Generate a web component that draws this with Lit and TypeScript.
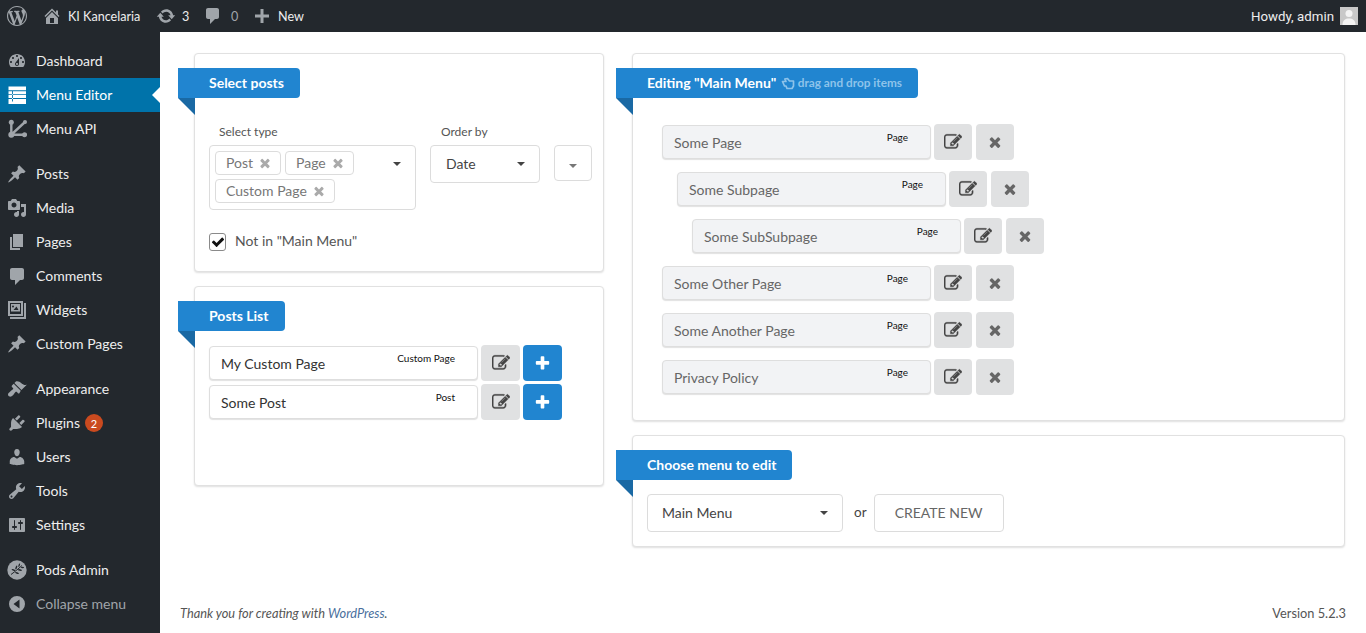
import { LitElement, html, css } from "lit";
import { customElement } from "lit/decorators.js";

const D: Record<string, string> = {
  wp: "M20 10c0-5.51-4.49-10-10-10C4.48 0 0 4.49 0 10c0 5.52 4.48 10 10 10 5.51 0 10-4.48 10-10zM7.78 15.37L4.37 6.22c.55-.02 1.17-.08 1.17-.08.5-.06.44-1.13-.06-1.11 0 0-1.45.11-2.37.11-.18 0-.37 0-.58-.01C4.12 2.69 6.87 1.11 10 1.11c2.33 0 4.45.87 6.05 2.34-.68-.11-1.65.39-1.65 1.58 0 .74.45 1.36.9 2.1.35.61.55 1.36.55 2.46 0 1.49-1.4 5-1.4 5l-3.03-8.37c.54-.02.82-.17.82-.17.5-.05.44-1.25-.06-1.22 0 0-1.44.12-2.38.12-.87 0-2.33-.12-2.33-.12-.5-.03-.56 1.2-.06 1.22l.92.08 1.26 3.41zM17.41 10c.24-.64.74-1.87.43-4.25.7 1.29 1.05 2.71 1.05 4.25 0 3.29-1.73 6.24-4.4 7.78.97-2.59 1.94-5.2 2.92-7.78zM6.1 18.09C3.12 16.65 1.11 13.53 1.11 10c0-1.3.23-2.48.72-3.59C3.25 10.3 4.67 14.2 6.1 18.09zm4.03-6.63l2.58 6.98c-.86.29-1.76.45-2.71.45-.79 0-1.57-.11-2.29-.33.81-2.38 1.62-4.74 2.42-7.1z",
  home: "M16 8.5l1.53 1.53-1.06 1.06L10 4.62l-6.47 6.47-1.06-1.06L10 2.5l4 4v-2h2v4zm-6-2.46l6 5.99V18H4v-5.97zM12 17v-5H8v5h4z",
  updates: "M10.2 3.28c3.53 0 6.43 2.61 6.92 6h2.08l-3.5 4-3.5-4h2.32c-.45-1.97-2.21-3.45-4.32-3.45-1.45 0-2.73.71-3.54 1.78L4.95 5.66C6.23 4.2 8.11 3.28 10.2 3.28zm-.4 13.44c-3.52 0-6.43-2.61-6.92-6H.8l3.5-4c1.17 1.33 2.33 2.67 3.5 4H5.48c.45 1.97 2.21 3.45 4.32 3.45 1.45 0 2.73-.71 3.54-1.78l1.71 1.95c-1.28 1.46-3.15 2.38-5.25 2.38z",
  comment: "M5 2h9c1.1 0 2 .9 2 2v7c0 1.1-.9 2-2 2h-2l-5 5v-5H5c-1.1 0-2-.9-2-2V4c0-1.1.9-2 2-2z",
  plus: "M17 8.500v3h-5.500V17h-3v-5.500H3v-3h5.500V3h3v5.500z",
  dashboard: "M3.76 16h12.48c1.1-1.37 1.76-3.11 1.76-5 0-4.42-3.58-8-8-8s-8 3.58-8 8c0 1.89.66 3.63 1.76 5zM10 4c.55 0 1 .45 1 1s-.45 1-1 1-1-.45-1-1 .45-1 1-1zM6 6c.55 0 1 .45 1 1s-.45 1-1 1-1-.45-1-1 .45-1 1-1zm8 0c.55 0 1 .45 1 1s-.45 1-1 1-1-.45-1-1 .45-1 1-1zm-5.37 5.55L12 7v6c0 1.1-.9 2-2 2s-2-.9-2-2c0-.57.24-1.08.63-1.45zM4 10c.55 0 1 .45 1 1s-.45 1-1 1-1-.45-1-1 .45-1 1-1zm12 0c.55 0 1 .45 1 1s-.45 1-1 1-1-.45-1-1 .45-1 1-1zm-5 3c0-.55-.45-1-1-1s-1 .45-1 1 .45 1 1 1 1-.45 1-1z",
  pin: "M10.44 3.02l1.82-1.82 6.36 6.35-1.83 1.82c-1.05-.68-2.48-.57-3.41.36l-.75.75c-.92.93-1.04 2.35-.35 3.41l-1.83 1.82-2.41-2.41-2.8 2.79c-.42.42-3.38 2.71-3.8 2.29s1.86-3.39 2.28-3.81l2.79-2.79L4.1 9.36l1.83-1.82c1.05.69 2.48.57 3.4-.36l.75-.75c.93-.92 1.05-2.35.36-3.41z",
  media: "M13 11V4c0-.55-.45-1-1-1h-1.670L9 1H5L3.670 3H2c-.55 0-1 .45-1 1v7c0 .55.45 1 1 1h10c.55 0 1-.45 1-1zM7 4.500c1.380 0 2.500 1.120 2.500 2.500S8.380 9.500 7 9.500 4.500 8.380 4.500 7 5.620 4.500 7 4.500zM14 6h5v10.500c0 1.380-1.120 2.500-2.500 2.500S14 17.880 14 16.500s1.120-2.500 2.500-2.500c.17 0 .34.02.5.05V9h-3V6zm-4 8.050V13h2v3.500c0 1.380-1.120 2.500-2.500 2.500S7 17.880 7 16.500 8.120 14 9.500 14c.17 0 .34.02.5.05z",
  page: "M6 15V2h10v13H6zm-1 1h8v2H3V5h2v11z",
  comments: "M5 2h10c1.100 0 2 .9 2 2v8c0 1.100-.9 2-2 2h-2l-5 5v-5H5c-1.100 0-2-.9-2-2V4c0-1.100.9-2 2-2z",
  widgets: "M1 1h15v15H1zM3 3v11h11V3zM17 3h2v16H3v-2h14zM4 4h9v7.500H4zM6 5.500a1 1 0 100 2 1 1 0 000-2zM6.500 10l3-3.500 2 3.500z",
  appearance: "M14.480 11.060L7.410 3.990l1.500-1.500c.5-.56 2.300-.47 3.510.32 1.210.8 1.430 1.280 2.910 2.100 1.180.64 2.450 1.260 4.450.85zm-.71.71L6.700 4.700 4.930 6.470c-.39.39-.39 1.020 0 1.410l1.060 1.060c.39.39.39 1.030 0 1.420-.6.6-1.430 1.110-2.210 1.690-.35.26-.7.53-1.010.84C1.430 13.730 1 14.730 1 15.500c0 .95.700 1.710 1.600 2 .23.08.48.13.73.13.8 0 1.800-.5 2.630-1.300.31-.31.58-.66.84-1.010.58-.78 1.090-1.610 1.690-2.210.39-.39 1.030-.39 1.420 0l1.060 1.060c.39.39 1.020.39 1.410 0z",
  plugins: "M13.110 4.360L9.870 7.600 8 5.730l3.240-3.240c.35-.34 1.050-.2 1.560.32.52.51.66 1.210.31 1.550zm-8 1.770l.91-1.120 9.010 9.010-1.190.84c-.71.71-2.630 1.160-3.820 1.160H6.140L4.900 17.260c-.59.59-1.540.59-2.120 0-.59-.58-.59-1.530 0-2.120l1.240-1.240v-3.880c0-1.130.4-3.190 1.090-3.890zm7.260 3.970l3.240-3.240c.34-.35 1.040-.21 1.550.31.52.51.66 1.210.31 1.550l-3.240 3.250z",
  users: "M10 9.250c-2.270 0-2.730-3.440-2.730-3.440C7 4.020 7.820 2 9.970 2c2.160 0 2.980 2.020 2.710 3.810 0 0-.41 3.440-2.680 3.440zm0 2.570L12.720 10c2.390 0 4.520 2.330 4.520 4.530v2.490s-3.650 1.130-7.240 1.130c-3.650 0-7.240-1.130-7.240-1.130v-2.490c0-2.250 1.940-4.530 4.470-4.530z",
  tools: "M16.680 9.770c-1.340 1.340-3.300 1.670-4.950.99l-5.410 6.520c-.99.99-2.590.99-3.580 0s-.99-2.590 0-3.570l6.520-5.420c-.68-1.650-.35-3.610.99-4.950 1.280-1.280 3.120-1.620 4.720-1.060l-2.890 2.890 2.820 2.820 2.860-2.870c.53 1.580.18 3.390-1.080 4.650zM3.810 16.210c.4.39 1.040.39 1.430 0 .4-.4.4-1.040 0-1.430-.39-.4-1.030-.4-1.430 0-.39.39-.39 1.030 0 1.430z",
  settings: "M18 16V4c0-.55-.45-1-1-1H3c-.55 0-1 .45-1 1v12c0 .55.45 1 1 1h14c.55 0 1-.45 1-1zM8 11h1c.55 0 1 .45 1 1s-.45 1-1 1H8v1.500c0 .28-.22.5-.5.5s-.5-.22-.5-.5V13H6c-.55 0-1-.45-1-1s.45-1 1-1h1V5.500c0-.28.22-.5.5-.5s.5.22.5.5V11zm5-2h-1c-.55 0-1-.45-1-1s.45-1 1-1h1V5.500c0-.28.22-.5.5-.5s.5.22.5.5V7h1c.55 0 1 .45 1 1s-.45 1-1 1h-1v5.500c0 .28-.22.5-.5.5s-.5-.22-.5-.5V9z",
  collapse: "M10 2a8 8 0 100 16 8 8 0 000-16zM12.500 14.500L6.500 10l6-4.500z",
};

const FA = {
  edit: "M888 1184l116-116-152-152-116 116v56h96v96h56zm440-720q-16-16-33 1l-350 350q-17 17-1 33t33-1l350-350q17-17 1-33zm80 594v190q0 119-84.500 203.500t-203.500 84.500h-832q-119 0-203.500-84.500t-84.500-203.500v-832q0-119 84.500-203.500t203.500-84.500h832q63 0 117 25 15 7 18 23 3 17-9 29l-49 49q-14 14-32 8-23-6-45-6h-832q-66 0-113 47t-47 113v832q0 66 47 113t113 47h832q66 0 113-47t47-113v-126q0-13 9-22l64-64q15-15 35-7t20 29zm-96-738l288 288-672 672h-288v-288zm444 132l-92 92-288-288 92-92q28-28 68-28t68 28l152 152q28 28 28 68t-28 68z",
  times: "M1490 1322q0 40-28 68l-136 136q-28 28-68 28t-68-28l-294-294-294 294q-28 28-68 28t-68-28l-136-136q-28-28-28-68t28-68l294-294-294-294q-28-28-28-68t28-68l136-136q28-28 68-28t68 28l294 294 294-294q28-28 68-28t68 28l136 136q28 28 28 68t-28 68l-294 294 294 294q28 28 28 68z",
  plus: "M1600 736v192q0 40-28 68t-68 28h-416v416q0 40-28 68t-68 28h-192q-40 0-68-28t-28-68v-416h-416q-40 0-68-28t-28-68v-192q0-40 28-68t68-28h416v-416q0-40 28-68t68-28h192q40 0 68 28t28 68v416h416q40 0 68 28t28 68z",
  check: "M1671 566q0 40-28 68l-724 724-136 136q-28 28-68 28t-68-28l-136-136-362-362q-28-28-28-68t28-68l136-136q28-28 68-28t68 28l294 295 656-657q28-28 68-28t68 28l136 136q28 28 28 68z",
};

const dash = (k: string, size = 20) => html`<svg class="ic" width=${size} height=${size} viewBox="0 0 20 20" fill="currentColor"><path fill-rule="evenodd" d=${D[k]}></path></svg>`;
const fa = (k: keyof typeof FA, size: number) => html`<svg class="fa fa-${k}" width=${size} height=${size} viewBox="0 0 1792 1792" fill="currentColor"><path d=${FA[k]}></path></svg>`;

const menuListIcon = html`<svg class="ic" width="20" height="20" viewBox="0 0 20 20" fill="#fff"><path fill-rule="evenodd" d="M1.500 1.500h17.500v17.500H1.500zM1.500 5.300v.9h17.500v-.9zM1.500 9.200v.9h17.500v-.9zM1.500 13.100v.9h17.500v-.9zM5 6.200v10.300h.9V6.200z"></path></svg>`;
const apiIcon = html`<svg class="ic" width="20" height="20" viewBox="0 0 20 20" fill="currentColor" stroke="currentColor"><path d="M4.300 3.500V15.700L18 3M4.300 15.700H17.600" fill="none" stroke-width="2.400"></path><circle cx="4.300" cy="3.300" r="2.500" stroke="none"></circle><circle cx="4.300" cy="15.700" r="3" stroke="none"></circle><circle cx="17.600" cy="15.700" r="2.500" stroke="none"></circle><circle cx="18" cy="3" r="2" stroke="none"></circle></svg>`;
const podsIcon = html`<svg class="ic" width="20" height="20" viewBox="0 0 20 20"><circle cx="10" cy="10" r="9.700" fill="currentColor"></circle><path d="M4 14.500Q9 11 15 5.500" fill="none" stroke="#23282d" stroke-width="1"></path><g fill="#23282d"><ellipse cx="6.500" cy="10" rx="2" ry=".8" transform="rotate(20 6.500 10)"></ellipse><ellipse cx="9.300" cy="7.500" rx="2" ry=".8" transform="rotate(-70 9.300 7.500)"></ellipse><ellipse cx="12.200" cy="5.200" rx="1.800" ry=".7" transform="rotate(-70 12.200 5.200)"></ellipse><ellipse cx="10" cy="13" rx="2" ry=".8" transform="rotate(20 10 13)"></ellipse><ellipse cx="13" cy="10" rx="2" ry=".8" transform="rotate(10 13 10)"></ellipse><ellipse cx="15.500" cy="7.500" rx="1.600" ry=".7"></ellipse></g></svg>`;
const handIcon = html`<svg class="hand" width="14" height="13" viewBox="0 0 14 13" fill="none" stroke="currentColor" stroke-width="1.700" stroke-linejoin="round"><path d="M1.500 4.500H5L3.800 2 6.500 1.500 8.500 4H12.500V9L11 11.500H6L5 9H3.500z"></path></svg>`;

interface MenuItem { icon: any; label: string; cls?: string; badge?: string; }

const groups: MenuItem[][] = [
  [
    { icon: dash("dashboard"), label: "Dashboard" },
    { icon: menuListIcon, label: "Menu Editor", cls: "active" },
    { icon: apiIcon, label: "Menu API" },
  ],
  [
    { icon: dash("pin"), label: "Posts" },
    { icon: dash("media"), label: "Media" },
    { icon: dash("page"), label: "Pages" },
    { icon: dash("comments"), label: "Comments" },
    { icon: dash("widgets"), label: "Widgets" },
    { icon: dash("pin"), label: "Custom Pages" },
  ],
  [
    { icon: dash("appearance"), label: "Appearance" },
    { icon: dash("plugins"), label: "Plugins", badge: "2" },
    { icon: dash("users"), label: "Users" },
    { icon: dash("tools"), label: "Tools" },
    { icon: dash("settings"), label: "Settings" },
  ],
  [
    { icon: podsIcon, label: "Pods Admin" },
    { icon: dash("collapse"), label: "Collapse menu", cls: "muted" },
  ],
];

const menuRows = [
  { label: "Some Page", indent: 0 },
  { label: "Some Subpage", indent: 1 },
  { label: "Some SubSubpage", indent: 2 },
  { label: "Some Other Page", indent: 0 },
  { label: "Some Another Page", indent: 0 },
  { label: "Privacy Policy", indent: 0 },
];

@customElement("app-root")
export class AppRoot extends LitElement {
  static styles = css`
    :host { display: block; height: 633px; overflow: hidden; background: #fff; font-family: Lato, sans-serif; color: #32373c; position: relative; }
    * { box-sizing: border-box; }
    .ic, .fa, .hand { display: block; flex: none; }
    .fa-edit path { stroke: currentColor; stroke-width: 35; }

    .adminbar { height: 32px; background: #23282d; color: #eee; display: flex; align-items: center; font-size: 12.600px; }
    .ab { display: flex; align-items: center; height: 32px; color: #eee; }
    .ab .ic { color: #a0a5aa; }
    .logo { margin-left: 7px; width: 35px; }
    .home { width: 112px; }
    .home .ic { margin-right: 6px; }
    .updates { width: 47px; gap: 6px; margin-left: 2px; }
    .cmts { width: 49px; gap: 8px; }
    .cmts span { color: #a0a5aa; }
    .new { gap: 6px; }
    .spacer { flex: 1; }
    .howdy { font-family: Roboto, sans-serif; font-size: 13.300px; color: #eee; }
    .avatar { width: 18px; height: 18px; margin: 0 8px 0 6px; background: #c9c9c9; display: block; }

    .body { display: flex; height: 601px; }
    .sidebar { width: 160px; flex: none; background: #23282d; padding-top: 12px; }
    .group { margin-bottom: 11px; }
    .item { height: 34px; display: flex; align-items: center; padding-left: 7px; color: #eee; font-size: 14px; position: relative; }
    .item .ic { color: #a0a5aa; margin-right: 9px; }
    .item .lbl { margin-bottom: 2px; }
    .item.active { background: #0073aa; color: #fff; }
    .item.active::after { content: ""; position: absolute; right: 0; top: 50%; margin-top: -8px; border: 8px solid transparent; border-right-color: #fff; border-left-width: 0; }
    .item.muted { color: #a0a5aa; }
    .badge { width: 18px; height: 18px; border-radius: 50%; background: #ca4a1f; color: #fff; font-size: 11px; display: flex; align-items: center; justify-content: center; margin-left: 5px; }

    .main { flex: 1; min-width: 0; display: flex; flex-direction: column; padding: 21px 21px 0 34px; }
    .cols { display: flex; gap: 28px; align-items: flex-start; height: 519px; }
    .left { width: 410px; flex: none; display: flex; flex-direction: column; gap: 14px; }
    .right { flex: 1; min-width: 0; display: flex; flex-direction: column; gap: 14px; }
    .card { background: #fff; border: 1px solid #e1e1e1; border-radius: 4px; box-shadow: 0 1px 2px rgba(0,0,0,.13); padding-top: 14px; position: relative; }
    .ribbon { position: relative; display: block; width: fit-content; height: 30px; line-height: 30px; margin-left: -17px; padding: 0 16px 0 31px; background: #2185d0; color: #fff; font-weight: 700; font-size: 14px; border-radius: 0 4px 4px 0; white-space: nowrap; }
    .ribbon::after { content: ""; position: absolute; left: 0; top: 30px; border-style: solid; border-width: 0 17px 17px 0; border-color: transparent #1a69a4 transparent transparent; }
    .ribbon small { font-size: 11.800px; font-weight: 700; color: #8ec3ea; margin-left: 1px; display: inline-flex; align-items: center; gap: 3px; vertical-align: top; }

    .nudge { margin-bottom: 2px; }

    .c1 { height: 219px; }
    .filters { display: flex; padding: 26px 0 0 14px; align-items: flex-start; }
    .field { display: flex; flex-direction: column; }
    .field label { font-size: 12px; line-height: 15px; color: #555; margin-bottom: 6px; padding-left: 10px; }
    .multi { width: 207px; height: 65px; border: 1px solid #dcdcdc; border-radius: 4px; padding: 5px; display: flex; flex-wrap: wrap; gap: 4px; align-content: flex-start; position: relative; }
    .chip { height: 24px; border: 1px solid #dcdcdc; border-radius: 4px; padding: 0 8px 0 10px; display: flex; align-items: center; gap: 5px; font-size: 14px; color: #777; }
    .chip .fa { color: #aaa; }
    .caret { width: 0; height: 0; border-style: solid; border-width: 4px 4px 0; border-color: #444 transparent transparent; display: block; flex: none; }
    .multi .caret { position: absolute; right: 14px; top: 16px; }
    .order { margin-left: 14px; }
    .order label { padding-left: 11px; }
    .sel { border: 1px solid #dcdcdc; border-radius: 4px; display: flex; align-items: center; justify-content: space-between; font-size: 14px; color: #444; background: #fff; }
    .sel.date { width: 110px; height: 38px; padding: 0 14px 0 15px; }
    .sel.dir { width: 38px; height: 36px; margin: 21px 0 0 14px; justify-content: center; padding-top: 6px; }
    .sel.dir .caret { border-top-color: #777; }
    .check { display: flex; align-items: center; margin: 22px 0 0 14px; font-size: 14px; color: #555; gap: 9px; }
    .box { width: 17px; height: 18px; border: 1px solid #8a8a8a; border-radius: 3px; display: flex; align-items: center; justify-content: center; color: #111; }

    .c2 { height: 200px; }
    .list { padding: 14px 0 0 14px; display: flex; flex-direction: column; gap: 3px; }
    .row { display: flex; align-items: center; height: 36px; }
    .tile { width: 269px; height: 34px; background: #fff; border: 1px solid #dedede; border-radius: 4px; box-shadow: 0 1px 1px rgba(0,0,0,.12); padding: 0 22px 0 11px; display: flex; justify-content: space-between; font-size: 14px; color: #333; line-height: 34px; }
    .tile .type { font-size: 10px; color: #111; line-height: 12px; margin-top: 5px; }
    .btn { width: 39px; height: 36px; border-radius: 4px; background: #e0e1e2; color: #444; display: flex; align-items: center; justify-content: center; margin-left: 3px; }
    .btn.blue { background: #2185d0; color: #fff; }
    .btn.x { width: 38px; margin-left: 4px; color: #666; }

    .c3 { height: 368px; }
    .tree { padding: 26px 0 0 29px; display: flex; flex-direction: column; gap: 11px; }
    .tree .tile { background: #f2f3f5; color: #666; }
    .tree .btn { width: 38px; }
    .i1 { margin-left: 15px; }
    .i2 { margin-left: 30px; }

    .c4 { height: 112px; }
    .choose { display: flex; align-items: center; padding: 14px 0 0 14px; font-size: 14px; }
    .sel.menu { width: 196px; height: 38px; padding: 0 14px; }
    .or { margin: 0 7px 2px 11px; color: #444; font-size: 13.500px; }
    .create { width: 130px; height: 38px; border: 1px solid #dcdcdc; border-radius: 4px; display: flex; align-items: center; justify-content: center; font-size: 14px; color: #666; }

    .footer { display: flex; justify-content: space-between; font-size: 12.800px; color: #555; margin: 33px -1px 0 -14px; line-height: 16px; }
    .footer i { font-style: italic; }
    .footer a { color: #4a6f9d; text-decoration: none; }
  `;

  private row(type: string, indentCls: string, trailing: any, itemLabel: string) {
    return html`<div class="row ${indentCls}">
      <div class="tile"><span>${itemLabel}</span><span class="type">${type}</span></div>
      <div class="btn">${fa("edit", 18)}</div>
      ${trailing}
    </div>`;
  }

  render() {
    return html`
      <div class="adminbar">
        <div class="ab logo">${dash("wp", 20)}</div>
        <div class="ab home">${dash("home")}<span>KI Kancelaria</span></div>
        <div class="ab updates">${dash("updates")}<span>3</span></div>
        <div class="ab cmts">${dash("comment")}<span>0</span></div>
        <div class="ab new">${dash("plus")}<span>New</span></div>
        <div class="spacer"></div>
        <span class="howdy">Howdy, admin</span>
        <svg class="avatar" viewBox="0 0 18 18"><rect width="18" height="18" fill="#c8c8c8"></rect><circle cx="9" cy="6.500" r="3.500" fill="#f3f3f3"></circle><path d="M2.500 18c0-5 3-6.500 6.500-6.500s6.500 1.500 6.500 6.500z" fill="#f3f3f3"></path></svg>
      </div>
      <div class="body">
        <nav class="sidebar">
          ${groups.map(g => html`<div class="group">
            ${g.map(m => html`<div class="item ${m.cls ?? ""}">${m.icon}<span class="lbl">${m.label}</span>${m.badge ? html`<span class="badge">${m.badge}</span>` : ""}</div>`)}
          </div>`)}
        </nav>
        <main class="main">
          <div class="cols">
            <div class="left">
              <section class="card c1">
                <div class="ribbon">Select posts</div>
                <div class="filters">
                  <div class="field">
                    <label>Select type</label>
                    <div class="multi">
                      <span class="chip"><span class="nudge">Post</span> ${fa("times", 14)}</span>
                      <span class="chip"><span class="nudge">Page</span> ${fa("times", 14)}</span>
                      <span class="chip"><span class="nudge">Custom Page</span> ${fa("times", 14)}</span>
                      <span class="caret"></span>
                    </div>
                  </div>
                  <div class="field order">
                    <label>Order by</label>
                    <div class="sel date"><span class="nudge">Date</span><span class="caret"></span></div>
                  </div>
                  <div class="sel dir"><span class="caret"></span></div>
                </div>
                <div class="check"><span class="box">${fa("check", 14)}</span><span class="nudge">Not in "Main Menu"</span></div>
              </section>
              <section class="card c2">
                <div class="ribbon">Posts List</div>
                <div class="list">
                  ${this.row("Custom Page", "", html`<div class="btn blue">${fa("plus", 17)}</div>`, "My Custom Page")}
                  ${this.row("Post", "", html`<div class="btn blue">${fa("plus", 17)}</div>`, "Some Post")}
                </div>
              </section>
            </div>
            <div class="right">
              <section class="card c3">
                <div class="ribbon">Editing "Main Menu" <small>${handIcon}drag and drop items</small></div>
                <div class="tree">
                  ${menuRows.map(r => this.row("Page", r.indent ? `i${r.indent}` : "", html`<div class="btn x">${fa("times", 16)}</div>`, r.label))}
                </div>
              </section>
              <section class="card c4">
                <div class="ribbon">Choose menu to edit</div>
                <div class="choose">
                  <div class="sel menu"><span class="nudge">Main Menu</span><span class="caret"></span></div>
                  <span class="or">or</span>
                  <div class="create"><span class="nudge">CREATE NEW</span></div>
                </div>
              </section>
            </div>
          </div>
          <footer class="footer">
            <i>Thank you for creating with <a>WordPress</a>.</i>
            <span>Version 5.2.3</span>
          </footer>
        </main>
      </div>
    `;
  }
}
